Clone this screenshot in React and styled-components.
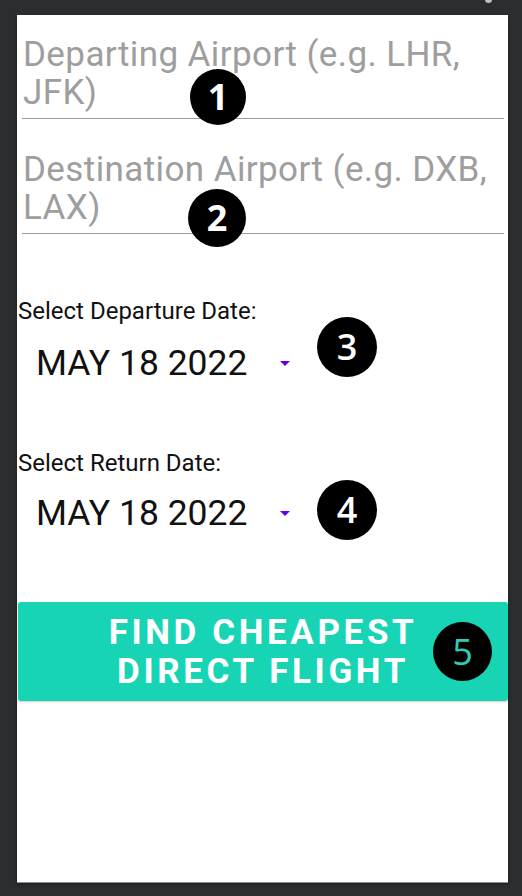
import React from 'react';
import styled, { createGlobalStyle } from 'styled-components';

const Global = createGlobalStyle`
	html, body {
		margin: 0;
		padding: 0;
		background: #2b2d30;
	}
	body {
		font-family: Roboto, "Liberation Sans", sans-serif;
	}
`;

const Screen = styled.div`
	position: relative;
	width: 522px;
	height: 896px;
	padding: 15px 0 0 17px;
	box-sizing: border-box;
	background: #2b2d30;
	overflow: hidden;
`;

const Dot = styled.div`
	position: absolute;
	top: -4px;
	left: 485px;
	width: 7px;
	height: 7px;
	border-radius: 50%;
	background: #bfc1c4;
`;

const Panel = styled.div`
	position: relative;
	width: 491px;
	height: 867px;
	background: #ffffff;
	box-shadow: 0 1px 0 #8e8e8e, 0 2px 3px rgba(0, 0, 0, 0.4);
	display: flex;
	flex-direction: column;
`;

const Field = styled.div`
	margin: ${props => props.top}px 4px 0 5px;
	padding: 0 0 6px 1px;
	border-bottom: 1px solid #9b9b9b;
	font-size: 35px;
	line-height: 38px;
	letter-spacing: 0.4px;
	color: #9e9e9e;
`;

const DateBlock = styled.div`
	margin-top: ${props => props.top}px;
	display: flex;
	flex-direction: column;
`;

const Label = styled.div`
	font-size: 24px;
	line-height: 28px;
	color: #111111;
	padding-left: 1px;
`;

const Spinner = styled.div`
	margin-top: ${props => props.gap}px;
	display: flex;
	align-items: center;
	padding-left: 19px;
	height: 40px;
`;

const DateText = styled.span`
	font-size: 35.5px;
	line-height: 40px;
	color: #111111;
`;

const Caret = styled.span`
	margin-left: 33px;
	margin-top: 1px;
	width: 0;
	height: 0;
	border-left: 5.5px solid transparent;
	border-right: 5.5px solid transparent;
	border-top: 5.5px solid #6200ee;
`;

const Button = styled.button`
	margin: 69px 0 0 1px;
	height: 99px;
	width: 490px;
	border: none;
	border-radius: 3px;
	background: #17d4b4;
	box-shadow: 0 1px 2px rgba(0, 0, 0, 0.2);
	color: #ffffff;
	font-family: Roboto, "Liberation Sans", sans-serif;
	font-weight: bold;
	font-size: 35px;
	line-height: 39px;
	letter-spacing: 3.6px;
	text-align: center;
	padding: 0;
`;

const Badge = styled.div`
	position: absolute;
	left: ${props => props.x}px;
	top: ${props => props.y}px;
	width: ${props => props.size}px;
	height: ${props => props.size}px;
	border-radius: 50%;
	background: #000000;
	color: ${props => props.color || '#ffffff'};
	font-family: "Open Sans", "DejaVu Sans", sans-serif;
	font-weight: ${props => props.weight || 700};
	font-size: 36px;
	display: flex;
	align-items: center;
	justify-content: center;
	line-height: 1;
`;

export default function App() {
	return (
		<>
			<Global />
			<Screen>
				<Dot />
				<Panel>
					<Field top={21}>Departing Airport (e.g. LHR, JFK)</Field>
					<Field top={32}>Destination Airport (e.g. DXB, LAX)</Field>
					<DateBlock top={63}>
						<Label>Select Departure Date:</Label>
						<Spinner gap={18}>
							<DateText>MAY 18 2022</DateText>
							<Caret />
						</Spinner>
					</DateBlock>
					<DateBlock top={66}>
						<Label>Select Return Date:</Label>
						<Spinner gap={16}>
							<DateText>MAY 18 2022</DateText>
							<Caret />
						</Spinner>
					</DateBlock>
					<Button>FIND CHEAPEST<br />DIRECT FLIGHT</Button>
					<Badge x={173} y={54} size={56}>1</Badge>
					<Badge x={171} y={174} size={58}>2</Badge>
					<Badge x={300} y={302} size={60} weight={600}>3</Badge>
					<Badge x={300} y={465} size={60} weight={600}>4</Badge>
					<Badge x={416} y={607} size={59} weight={400} color="#2fcdb3">5</Badge>
				</Panel>
			</Screen>
		</>
	);
}
